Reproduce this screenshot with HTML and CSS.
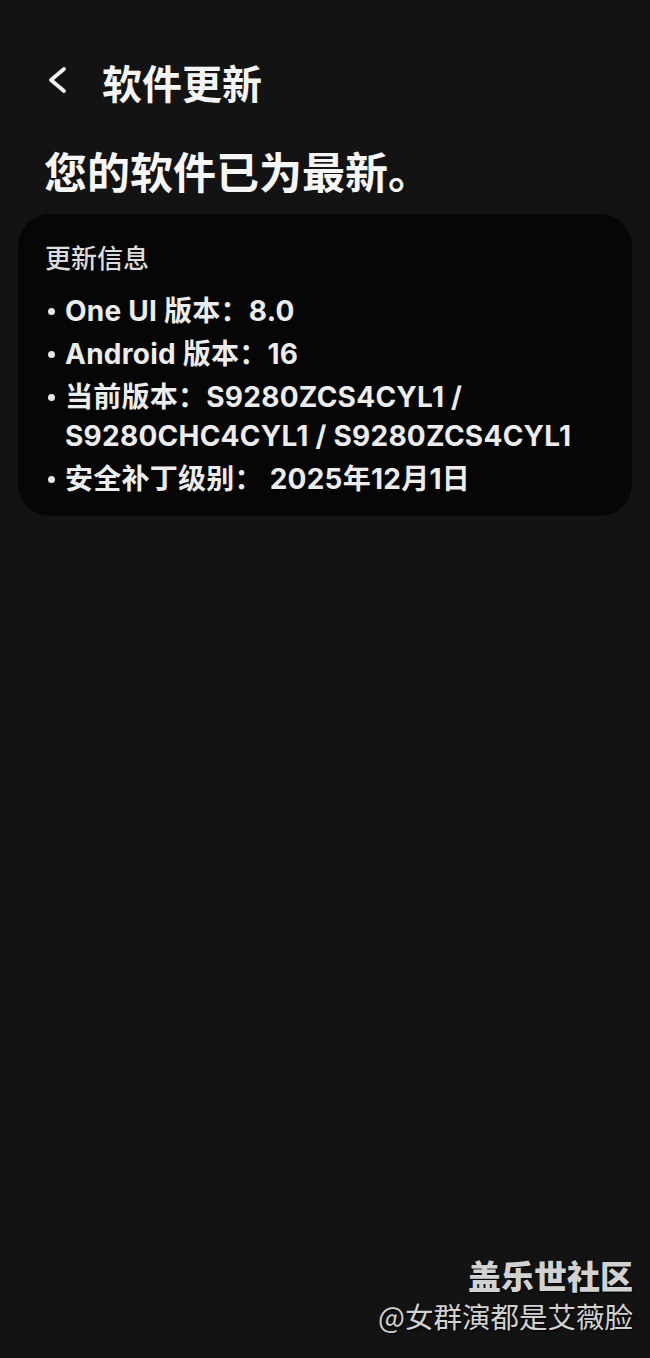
FILE: index.html
```html
<!DOCTYPE html>
<html lang="zh-CN">
<head>
<meta charset="utf-8">
<title>软件更新</title>
<link rel="stylesheet" href="styles.css">
</head>
<body>
<div class="screen">
  <header class="appbar">
    <span class="back" aria-label="返回">
      <svg width="22" height="30" viewBox="0 0 22 30"><path d="M18 4 L5 15 L18 26" fill="none" stroke="#f2f2f2" stroke-width="3.8" stroke-linecap="round" stroke-linejoin="round"/></svg>
    </span>
    <h1 class="title">软件更新</h1>
  </header>
  <h2 class="status">您的软件已为最新。</h2>
  <section class="card">
    <div class="card-label">更新信息</div>
    <ul class="info">
      <li>One UI 版本：8.0</li>
      <li>Android 版本：16</li>
      <li>当前版本：S9280ZCS4CYL1 / S9280CHC4CYL1 / S9280ZCS4CYL1</li>
      <li>安全补丁级别：&nbsp;2025年12月1日</li>
    </ul>
  </section>
  <div class="watermark">
    <div class="wm-brand">盖乐世社区</div>
    <div class="wm-user">@女群演都是艾薇脸</div>
  </div>
</div>
</body>
</html>
```
FILE: styles.css
```css
html, body {
  margin: 0;
  padding: 0;
  background: #131313;
}
body {
  font-family: Inter, "Noto Sans CJK SC", sans-serif;
  color: #f2f2f2;
}
.screen {
  position: relative;
  width: 650px;
  height: 1358px;
  overflow: hidden;
}
.appbar {
  display: flex;
  align-items: center;
  padding: 59px 0 0 46px;
  height: 46px;
}
.back {
  display: flex;
  width: 22px;
  height: 30px;
  margin: -5px 34px 0 0;
}
.title {
  margin: 0;
  font-family: "Noto Sans CJK SC", sans-serif;
  font-size: 40px;
  font-weight: 700;
  line-height: 46px;
  color: #f4f4f4;
}
.status {
  margin: 38px 0 0 44px;
  font-family: "Noto Sans CJK SC", sans-serif;
  font-size: 43px;
  font-weight: 700;
  line-height: 54px;
  color: #f6f6f6;
}
.card {
  margin: 17px 18px 0 18px;
  background: #060606;
  border-radius: 32px;
  padding: 25px 27px 17px 27px;
}
.card-label {
  font-family: "Noto Sans CJK SC", sans-serif;
  font-size: 26px;
  font-weight: 500;
  line-height: 36px;
  color: #dcdcdc;
}
.info {
  list-style: none;
  margin: 17px 0 0 0;
  padding: 0;
  display: flex;
  flex-direction: column;
  gap: 4px;
}
.info li {
  position: relative;
  padding-left: 20px;
  font-size: 28px;
  font-weight: 700;
  line-height: 39px;
  color: #ececec;
  letter-spacing: 0.25px;
}
.info li::before {
  content: "";
  position: absolute;
  left: 3px;
  top: 16px;
  width: 7px;
  height: 7px;
  border-radius: 50%;
  background: #e6e6e6;
}
.watermark {
  position: absolute;
  right: 17px;
  bottom: 22px;
  text-align: right;
  font-family: "Noto Sans CJK SC", sans-serif;
  color: #d2d2d2;
  text-shadow: 1px 1px 2px #000;
}
.wm-brand {
  font-size: 33px;
  font-weight: 900;
  line-height: 42px;
}
.wm-user {
  font-size: 28.5px;
  font-weight: 400;
  line-height: 40px;
}
```
